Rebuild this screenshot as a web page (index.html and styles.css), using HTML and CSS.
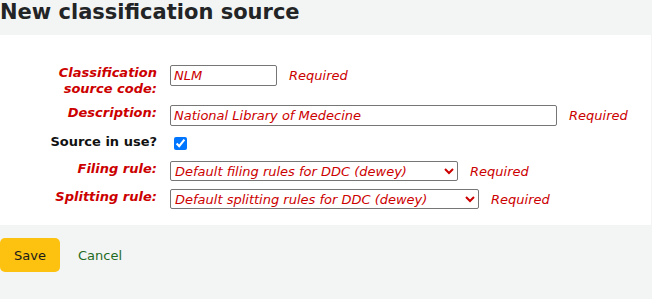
FILE: index.html
```html
<!DOCTYPE html>
<html>
<head>
<meta charset="utf-8">
<link rel="stylesheet" href="styles.css">
</head>
<body>
<h1 class="title">New classification source</h1>
<form class="panel">
  <div class="row">
    <label class="lbl req">Classification<br>source code:</label>
    <div class="field"><input class="inp inp-code" type="text" value="NLM"><span class="required">Required</span></div>
  </div>
  <div class="row">
    <label class="lbl req">Description:</label>
    <div class="field"><input class="inp inp-desc" type="text" value="National Library of Medecine"><span class="required">Required</span></div>
  </div>
  <div class="row">
    <label class="lbl plain">Source in use?</label>
    <div class="field"><input class="chk" type="checkbox" checked></div>
  </div>
  <div class="row">
    <label class="lbl req">Filing rule:</label>
    <div class="field"><select class="sel sel-filing"><option>Default filing rules for DDC (dewey)</option></select><span class="required">Required</span></div>
  </div>
  <div class="row">
    <label class="lbl req">Splitting rule:</label>
    <div class="field"><select class="sel sel-split"><option>Default splitting rules for DDC (dewey)</option></select><span class="required">Required</span></div>
  </div>
</form>
<div class="actions">
  <button class="btn-save" type="button">Save</button>
  <a class="cancel" href="#">Cancel</a>
</div>
</body>
</html>
```

FILE: styles.css
```css
html, body {
  margin: 0;
  padding: 0;
}
body {
  background: #f3f4f4;
  font-family: "DejaVu Sans", sans-serif;
  font-size: 13px;
  color: #1a1a1a;
}
.title {
  margin: 0 0 11px 0;
  font-size: 21px;
  line-height: 24px;
  font-weight: bold;
  color: #222426;
}
.panel {
  background: #ffffff;
  margin: 0 1px 0 0;
  padding: 30px 0 16px 0;
  display: flex;
  flex-direction: column;
  gap: 8px;
}
.row {
  display: grid;
  grid-template-columns: 157px 1fr;
  column-gap: 13px;
  align-items: start;
}
.lbl {
  text-align: right;
  font-weight: bold;
  line-height: 16px;
}
.lbl.req {
  color: #cc0000;
  font-style: italic;
}
.lbl.plain {
  color: #111;
  line-height: 16px;
}
.field {
  display: flex;
  align-items: center;
  gap: 12px;
}
.required {
  color: #cc0000;
  font-style: italic;
  font-size: 13px;
}
.inp {
  box-sizing: border-box;
  height: 21px;
  margin: 0;
  padding: 0 3px;
  border: 1px solid #767676;
  border-radius: 2px;
  font-family: "DejaVu Sans", sans-serif;
  font-size: 13px;
  font-style: italic;
  color: #cc0000;
  background: #fff;
}
.inp-code { width: 107px; }
.inp-desc { width: 387px; }
.chk {
  margin: 3px 3px 3px 4px;
  width: 13px;
  height: 13px;
}
.sel {
  box-sizing: border-box;
  height: 20px;
  margin: 0;
  padding: 0;
  border: 1px solid #767676;
  border-radius: 2px;
  font-family: "DejaVu Sans", sans-serif;
  font-size: 13px;
  font-style: italic;
  color: #cc0000;
  background: #fff;
}
.sel-filing { width: 288px; }
.sel-split { width: 309px; }
.actions {
  display: flex;
  align-items: center;
  gap: 18px;
  margin-top: 13px;
}
.btn-save {
  width: 60px;
  height: 34px;
  background: #fdc20f;
  border: none;
  border-radius: 5px;
  font-family: "DejaVu Sans", sans-serif;
  font-size: 13px;
  color: #1a1a1a;
  padding: 0;
  margin: 0;
}
.cancel {
  color: #1f6b1f;
  text-decoration: none;
  font-size: 13px;
}
```
